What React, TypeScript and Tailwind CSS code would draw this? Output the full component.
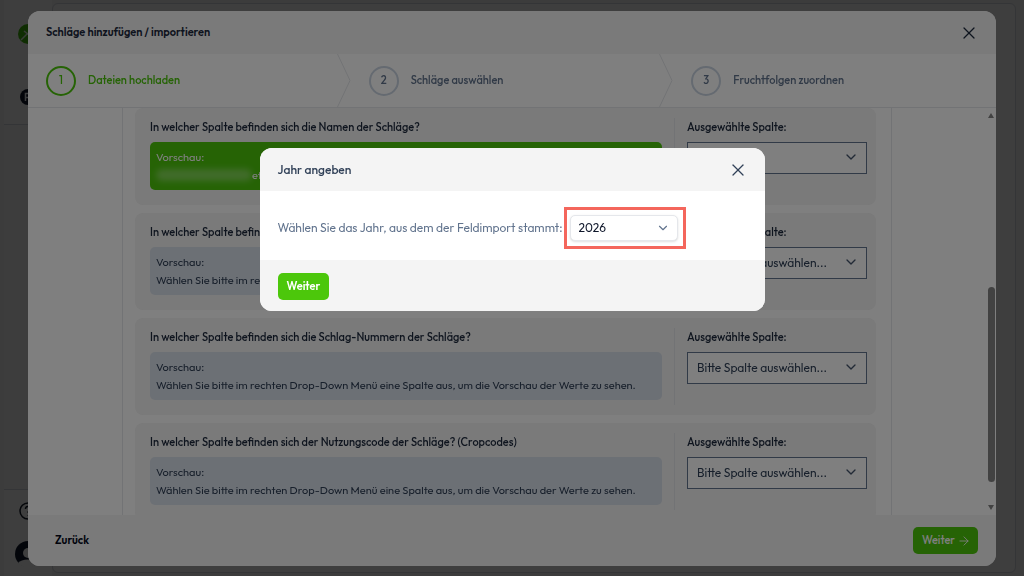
import { useState } from 'react'
import { ArrowRight, ChevronDown, X } from 'lucide-react'

// ── Data ──────────────────────────────────────────────────────────────────────

const STEPS = ['Dateien hochladen', 'Schläge auswählen', 'Fruchtfolgen zuordnen']

type ColumnQuestion = {
  id: string
  title: string
  preview?: string
}

const QUESTIONS: ColumnQuestion[] = [
  { id: 'name', title: 'In welcher Spalte befinden sich die Namen der Schläge?', preview: 'et' },
  { id: 'size', title: 'In welcher Spalte befinden sich die Größen der Schläge?' },
  { id: 'number', title: 'In welcher Spalte befinden sich die Schlag-Nummern der Schläge?' },
  { id: 'crop', title: 'In welcher Spalte befinden sich der Nutzungscode der Schläge? (Cropcodes)' },
]

const YEARS = ['2026', '2025', '2024']

// ── Page behind the dialogs ───────────────────────────────────────────────────

function AppShell() {
  return (
    <div className="flex h-screen bg-[#f1f1f1] pl-1">
      <nav className="flex w-12 flex-col bg-[#fafafa]">
        <div className="flex h-[125px] flex-col items-center gap-[45px] border-b border-gray-300 pt-6">
          <svg viewBox="0 0 20 20" className="size-5">
            <circle cx="10" cy="10" r="10" fill="#3fb50a" />
            <path d="M3 16 9 10M6 7l4 3 2-4" stroke="#dfeed8" strokeWidth="1.5" fill="none" />
          </svg>
          <svg viewBox="0 0 16 16" className="size-4">
            <circle cx="8" cy="8" r="8" fill="#0f172a" />
            <path d="M5.5 12V4.5H9a2 2 0 0 1 0 4H5.5" stroke="#f1f5f9" strokeWidth="1.5" fill="none" />
          </svg>
        </div>
        <div className="flex-1 border-b border-gray-300 bg-[#f5f5f5]" />
        <div className="flex h-[86px] flex-col items-center gap-[21px] pt-3">
          <svg viewBox="0 0 18 18" className="size-[18px] shrink-0" fill="none" stroke="#111827" strokeWidth="1.5">
            <circle cx="9" cy="9" r="8" />
            <path d="M6.5 7a2.5 2.5 0 1 1 3.5 2.3c-.7.3-1 .7-1 1.5M9 13v.6" />
          </svg>
          <svg viewBox="0 0 26 26" className="size-[26px] shrink-0">
            <circle cx="13" cy="13" r="13" fill="#0f172a" />
            <circle cx="13" cy="12" r="5" fill="#fafafa" />
            <path d="M3 22a11 6 0 0 1 20 0 13 13 0 0 1-20 0z" fill="#fafafa" />
          </svg>
        </div>
      </nav>
      <main className="my-[3px] mr-2 flex-1 rounded-md border border-gray-300 bg-[#fafafa]" />
    </div>
  )
}

// ── Import dialog ─────────────────────────────────────────────────────────────

function StepBar({ current }: { current: number }) {
  return (
    <ol className="grid h-[54px] shrink-0 grid-cols-3 border-b border-gray-200">
      {STEPS.map((label, i) => (
        <li
          key={label}
          className={`flex items-center gap-3 pl-[18px] text-[11px] font-medium ${i === current ? 'text-[#4cc70b]' : 'text-slate-500'}`}
        >
          <span
            className={`flex size-[30px] items-center justify-center rounded-full border-2 ${i === current ? 'border-[#4cc70b]' : 'border-slate-300'}`}
          >
            {i + 1}
          </span>
          <span className="flex-1">{label}</span>
          {i < STEPS.length - 1 && (
            <svg viewBox="0 0 14 53" className="h-[53px] w-[14px]" fill="none" stroke="#e5e7eb">
              <path d="M.5 0 13 26.5 .5 53" />
            </svg>
          )}
        </li>
      ))}
    </ol>
  )
}

function QuestionCard({ question }: { question: ColumnQuestion }) {
  const selectId = `column-${question.id}`
  return (
    <section className="flex h-[97px] shrink-0 rounded-lg bg-[#f4f4f4] py-[10px] pr-[9px] pl-[15px] text-[11px]">
      <div className="flex-1 pr-3">
        <h3 className="leading-[18px] font-medium text-slate-800">{question.title}</h3>
        <div
          className={`mt-[6px] h-12 rounded-[5px] px-[6px] py-[6px] leading-[18px] ${question.preview ? 'bg-[#4cc70b] text-white' : 'bg-[#d9e0ea] text-slate-700'}`}
        >
          <p>Vorschau:</p>
          {question.preview ? (
            <p className="flex items-center">
              <span className="h-3 w-24 rounded-full bg-white/30 blur-[3px]" />
              {question.preview}
            </p>
          ) : (
            <p className="whitespace-nowrap">
              Wählen Sie bitte im rechten Drop-Down Menü eine Spalte aus, um die Vorschau der Werte zu sehen.
            </p>
          )}
        </div>
      </div>
      <div className="w-[193px] border-l border-gray-200 pl-3">
        <label htmlFor={selectId} className="block leading-[18px] font-medium text-slate-800">
          Ausgewählte Spalte:
        </label>
        <div className="relative mt-[6px]">
          <select
            id={selectId}
            className="h-8 w-full appearance-none border border-slate-500 bg-white px-[9px] text-[12px] text-slate-700"
          >
            <option>{question.preview ? '' : 'Bitte Spalte auswählen...'}</option>
          </select>
          <ChevronDown className="pointer-events-none absolute top-[7px] right-2 size-4 text-slate-600" />
        </div>
      </div>
    </section>
  )
}

function ScrollTrack() {
  return (
    <div className="flex w-[10px] flex-col items-center justify-between py-[5px]">
      <svg viewBox="0 0 6 5" className="h-[5px] w-[6px]" fill="#858585">
        <path d="M3 0 6 5H0z" />
      </svg>
      <div className="mt-[145px] h-[195px] w-[7px] rounded-full bg-[#858585]" />
      <svg viewBox="0 0 6 5" className="h-[5px] w-[6px]" fill="#858585">
        <path d="M0 0h6L3 5z" />
      </svg>
    </div>
  )
}

function ImportDialog() {
  return (
    <div className="fixed inset-0 flex bg-black/50 px-7 pt-[11px] pb-[10px]">
      <div role="dialog" aria-labelledby="import-title" className="flex flex-1 flex-col overflow-hidden rounded-xl bg-white">
        <header className="flex h-[43px] shrink-0 items-center justify-between bg-[#f4f4f4] pr-[17px] pl-[18px]">
          <h1 id="import-title" className="text-[11px] font-semibold text-slate-800">
            Schläge hinzufügen / importieren
          </h1>
          <button type="button" aria-label="Schließen" className="text-slate-800">
            <X className="size-5" strokeWidth={1.5} />
          </button>
        </header>
        <StepBar current={0} />
        <div className="flex min-h-0 flex-1">
          <div className="flex min-w-0 flex-1 justify-center">
            <div className="flex w-[770px] flex-col gap-2 overflow-hidden border-x border-gray-200 pr-[15px] pl-3">
              {QUESTIONS.map((q) => (
                <QuestionCard key={q.id} question={q} />
              ))}
            </div>
          </div>
          <ScrollTrack />
        </div>
        <footer className="flex h-[51px] shrink-0 items-center justify-between bg-[#f4f4f4] pr-[18px] pl-[27px] text-[11px] font-semibold">
          <button type="button" className="text-slate-950">
            Zurück
          </button>
          <button type="button" className="flex h-[27px] items-center gap-[2px] rounded-[5px] bg-[#4cc70b] pr-[7px] pl-[9px] font-medium text-white">
            Weiter
            <ArrowRight className="size-[14px]" strokeWidth={1.5} />
          </button>
        </footer>
      </div>
    </div>
  )
}

// ── Year dialog ───────────────────────────────────────────────────────────────

function YearDialog() {
  const [year, setYear] = useState(YEARS[0])

  return (
    <div className="fixed inset-0 flex items-start justify-center bg-black/50 pt-[148px]">
      <div role="dialog" aria-labelledby="year-title" className="w-[505px] overflow-hidden rounded-xl bg-white">
        <header className="flex h-[43px] items-center justify-between bg-[#f4f4f4] pr-[17px] pl-[18px]">
          <h2 id="year-title" className="text-[12px] font-medium text-slate-700">
            Jahr angeben
          </h2>
          <button type="button" aria-label="Schließen" className="text-slate-700">
            <X className="size-5" strokeWidth={1.5} />
          </button>
        </header>
        <div className="flex items-center pt-4 pb-[11px] pl-[18px]">
          <label htmlFor="year" className="w-[286px] text-[12px] whitespace-nowrap text-slate-500">
            Wählen Sie das Jahr, aus dem der Feldimport stammt:
          </label>
          <div className="border-[3px] border-[#f4665c] py-[5px] pr-[5px] pl-[3px]">
            <div className="relative">
              <select
                id="year"
                value={year}
                onChange={(e) => setYear(e.target.value)}
                className="block h-[26px] w-[108px] appearance-none rounded-[5px] border border-gray-200 bg-white px-2 text-[12px] text-slate-900 shadow-sm"
              >
                {YEARS.map((y) => (
                  <option key={y}>{y}</option>
                ))}
              </select>
              <ChevronDown className="pointer-events-none absolute top-[6px] right-2 size-[14px] text-slate-500" />
            </div>
          </div>
        </div>
        <footer className="flex bg-[#f4f4f4] px-[18px] pt-[13px] pb-[11px]">
          <button type="button" className="h-[27px] rounded-[5px] bg-[#4cc70b] px-[9px] text-[11px] font-semibold text-white">
            Weiter
          </button>
        </footer>
      </div>
    </div>
  )
}

export default function App() {
  return (
    <div className="font-[Outfit,Lato,sans-serif]">
      <AppShell />
      <ImportDialog />
      <YearDialog />
    </div>
  )
}
